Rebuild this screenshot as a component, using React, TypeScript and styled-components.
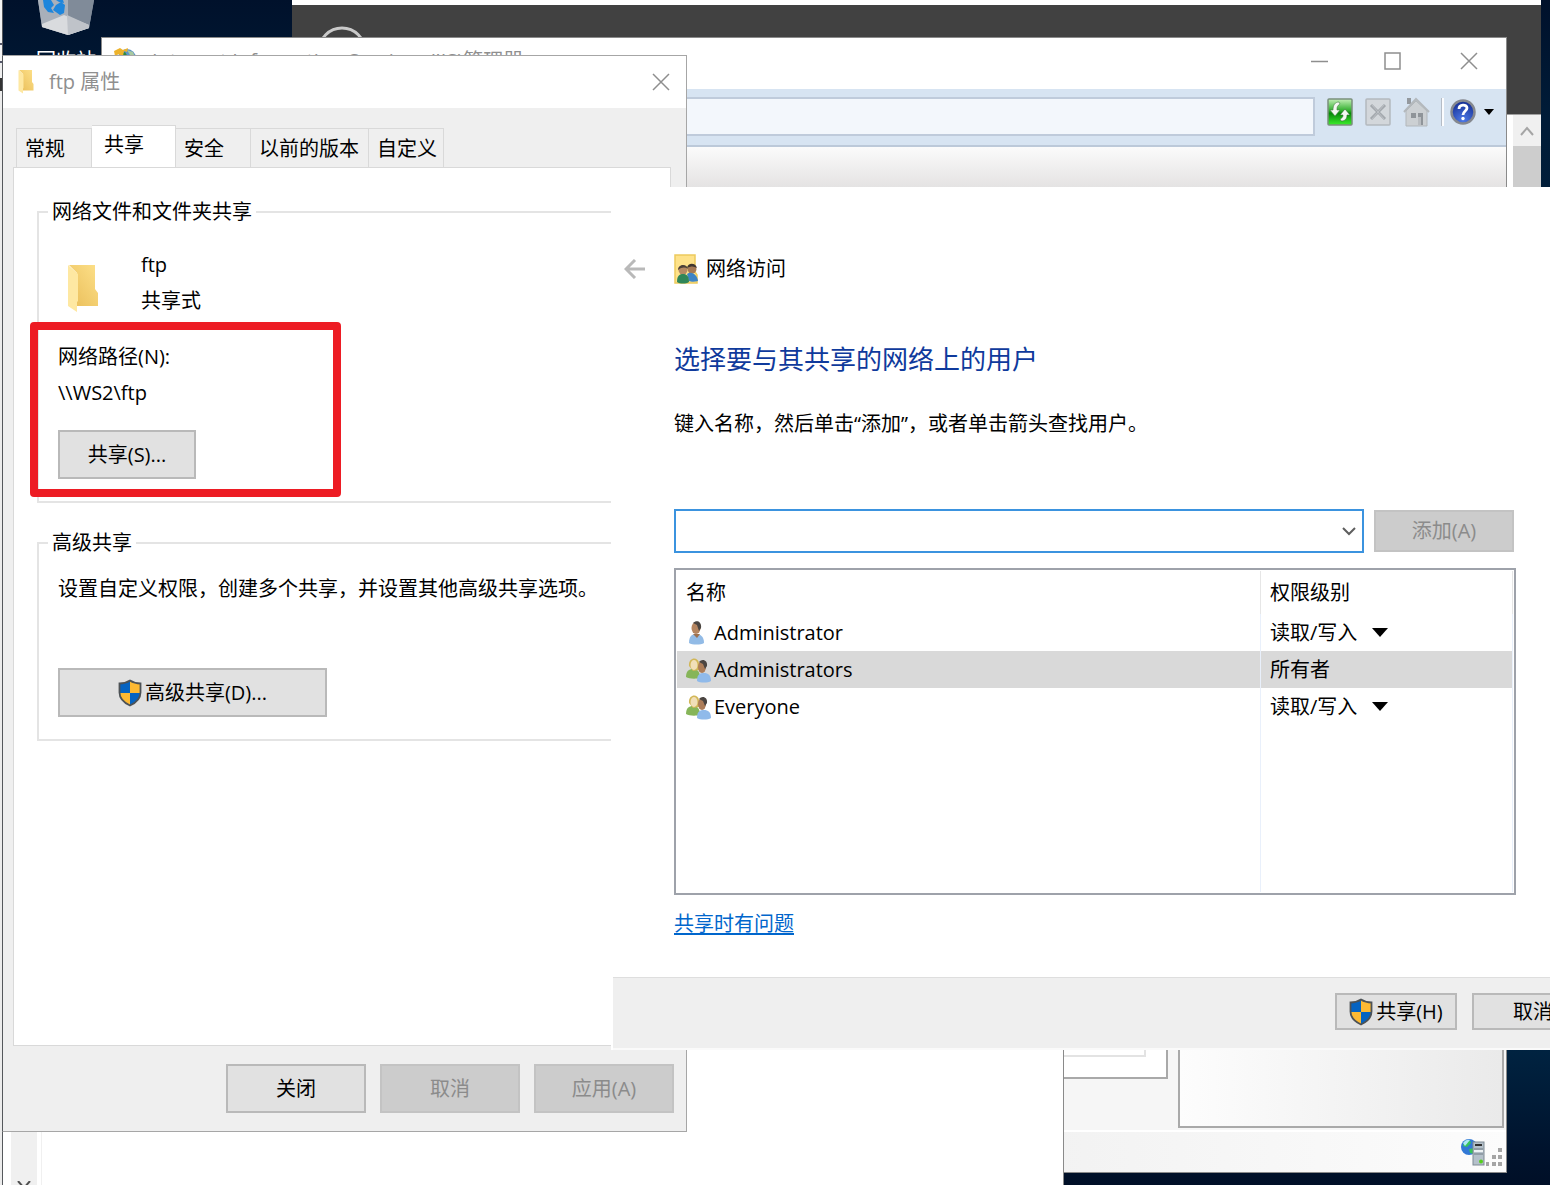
import React from 'react';
import styled, { createGlobalStyle, css } from 'styled-components';

const GlobalStyle = createGlobalStyle`
  *, *::before, *::after { box-sizing: border-box; }
  body { margin: 0; }
  body, button, input, select, table {
    font-family: "Open Sans", "Noto Sans CJK SC", sans-serif;
    font-size: 20px;
    line-height: 36px;
    color: #000;
  }
  h1, p { margin: 0; font-weight: 400; }
`;

/* ---------- desktop ---------- */

const Desktop = styled.main`
  position: relative;
  height: 100vh;
  min-height: 1100px;
  overflow: hidden;
  background: linear-gradient(180deg, #00112b 0%, #001c38 10%, #002442 88%, #00132d 97%, #000f27 100%);
`;

const Sliver = styled.div`
  position: absolute;
  left: 0;
  top: 0;
  bottom: 0;
  width: 3px;
  background: linear-gradient(#f4f4f4 0 43px, #55586a 43px 45px, #f4f4f4 45px 61px, #55586a 61px 63px, #f0f0f0 63px 78px, #333 78px 91px, #ececec 91px);
  border-right: 1px solid #55585c;
`;

const RecycleBin = styled.div`
  position: absolute;
  left: 20px;
  top: 0;
  width: 92px;
  display: flex;
  flex-direction: column;
  align-items: center;
  gap: 7px;
  color: #fff;
`;

/* ---------- server manager, behind everything ---------- */

const ManagerWindow = styled.section`
  position: absolute;
  left: 292px;
  right: 9px;
  top: 0;
  height: 600px;
  display: flex;
  flex-direction: column;
  background: #fff;
  padding-top: 5px;
`;

const ManagerBanner = styled.div`
  height: 109px;
  flex: none;
  padding: 21px 0 0 25px;
  background: #414141;
`;

const ManagerBody = styled.div`
  flex: 1;
  display: flex;
  justify-content: flex-end;
  border-top: 1px solid #a0a0a0;
`;

const ScrollTrack = styled.div`
  width: 28px;
  display: flex;
  flex-direction: column;
  background: #f0f0f0;
`;

const ScrollArrow = styled.div`
  height: 31px;
  display: flex;
  align-items: center;
  justify-content: center;
`;

const ScrollThumb = styled.div`
  height: 300px;
  background: #cdcdcd;
`;

/* ---------- IIS manager window ---------- */

const IisWindow = styled.section`
  position: absolute;
  left: 101px;
  right: 43px;
  top: 37px;
  bottom: 12px;
  display: flex;
  flex-direction: column;
  background: #fff;
  border: 1px solid #8a8a8a;
`;

const IisTitle = styled.header`
  height: 51px;
  flex: none;
  display: flex;
  align-items: center;
  gap: 11px;
  padding: 0 28px 5px 11px;
  color: #8f8f8f;
`;

const TitleText = styled.span`
  flex: 1;
  min-width: 0;
  white-space: nowrap;
`;

const CaptionButtons = styled.div`
  display: flex;
  gap: 39px;
`;

const IconButton = styled.button`
  display: inline-flex;
  align-items: center;
  justify-content: center;
  flex: none;
  padding: 0;
  border: 0;
  background: none;
`;

const AddressBar = styled.div`
  height: 58px;
  flex: none;
  display: flex;
  align-items: flex-start;
  gap: 12px;
  padding: 8px 12px 0 100px;
  background: #d7e4f2;
  border-bottom: 2px solid #bcc9d9;
`;

const AddressInput = styled.input`
  flex: 1;
  min-width: 0;
  height: 39px;
  background: #f3f7fc;
  border: 2px solid #bfcbdb;
  padding: 0 8px;
  outline: none;
`;

const BarIcons = styled.div`
  display: flex;
  align-items: center;
  gap: 12px;
`;

const HelpGroup = styled.div`
  display: flex;
  align-items: center;
  gap: 8px;
  padding-left: 6px;
  border-left: 2px solid #fbfcfe;
  box-shadow: -1px 0 0 #b5bcc6;
`;

const PageStrip = styled.div`
  height: 48px;
  flex: none;
  background: linear-gradient(#fbfbfb, #e0dede);
`;

const IisPanes = styled.div`
  flex: 1;
  display: flex;
  gap: 10px;
  padding: 0 2px 2px 0;
  background: #f6f6f6;
  border-bottom: 2px solid #fff;
`;

const CenterPane = styled.div`
  flex: 1;
  margin-bottom: 49px;
  padding: 0 20px 20px 0;
  display: flex;
  background: #fff;
  border: 2px solid #a9a9a9;
`;

const CenterInner = styled.div`
  flex: 1;
  border: 2px solid #e3e3e3;
`;

const ActionsPane = styled.div`
  width: 326px;
  background: linear-gradient(90deg, #fdfdfd, #eaeaea);
  border: 2px solid #a9a9a9;
`;

const StatusBar = styled.footer`
  height: 40px;
  flex: none;
  display: flex;
  align-items: center;
  justify-content: flex-end;
  padding-right: 3px;
  background: linear-gradient(90deg, #f0f0f0 60%, #fcfcfc);
`;

/* ---------- blank window at the lower left ---------- */

const BlankWindow = styled.section`
  position: absolute;
  left: 3px;
  bottom: 0;
  width: 1061px;
  height: 300px;
  display: flex;
  padding-left: 8px;
  background: #fff;
  border-right: 1px solid #8a8a8a;
`;

const BlankScroll = styled.div`
  width: 26px;
  display: flex;
  align-items: flex-end;
  justify-content: center;
  background: #f0f0f0;
`;

const BlankRule = styled.div`
  width: 5px;
  border-right: 1px solid #f0f0f0;
`;

/* ---------- properties dialog ---------- */

const PropsWindow = styled.section`
  position: absolute;
  left: 2px;
  top: 55px;
  bottom: 53px;
  width: 685px;
  display: flex;
  flex-direction: column;
  background: #efefef;
  border: 1px solid #a6a6a6;
  border-left-color: #55585c;
`;

const PropsTitle = styled.header`
  height: 52px;
  flex: none;
  display: flex;
  align-items: center;
  gap: 15px;
  padding: 0 16px 0 15px;
  background: #fff;
  color: #8f8f8f;
`;

const TabStrip = styled.div`
  flex: none;
  display: flex;
  align-items: flex-end;
  height: 59px;
  padding-left: 13px;
`;

const Tab = styled.button<{ $width: number; $selected?: boolean }>`
  width: ${(p) => p.$width}px;
  height: 39px;
  padding: 1px 0 0 8px;
  text-align: left;
  white-space: nowrap;
  background: #efefef;
  border: 1px solid #d9d9d9;
  border-left-width: 0;
  border-bottom: 0;
  &:first-child { border-left-width: 1px; }
  ${(p) =>
    p.$selected &&
    css`
      height: 43px;
      padding: 0 0 4px 12px;
      background: #fff;
      margin-bottom: -1px;
    `}
`;

const TabPanel = styled.div`
  flex: 1;
  display: flex;
  flex-direction: column;
  gap: 26px;
  margin: 0 15px 0 10px;
  padding: 30px 23px 0;
  background: #fff;
  border: 1px solid #d9d9d9;
`;

const Group = styled.fieldset`
  min-width: 0;
  margin: 0;
  padding: 14px 19px 22px;
  border: 2px solid #e4e4e4;
`;

const Legend = styled.legend`
  margin-left: -10px;
  padding: 0 4px;
  line-height: 28px;
`;

const ShareHead = styled.div`
  display: flex;
  align-items: center;
  gap: 43px;
  padding: 7px 0 0 10px;
  margin-bottom: 20px;
`;

const FolderSlot = styled.div`
  display: flex;
  padding-top: 12px;
`;

const PathBlock = styled.div`
  margin-bottom: 19px;
`;

const Note = styled.p`
  white-space: nowrap;
  margin-bottom: 61px;
`;

const PushButton = styled.button<{ $width: number; $height?: number }>`
  display: flex;
  align-items: center;
  justify-content: center;
  flex: none;
  gap: 3px;
  width: ${(p) => p.$width}px;
  height: ${(p) => p.$height ?? 49}px;
  padding: 0;
  white-space: nowrap;
  background: #e1e1e1;
  border: 2px solid #b9b9b9;
  &:disabled {
    background: #cccccc;
    border-color: #c3c3c3;
    color: #8b8b8b;
  }
`;

const PropsFooter = styled.footer`
  flex: none;
  display: flex;
  justify-content: flex-end;
  gap: 14px;
  padding: 18px 12px;
`;

/* ---------- network access wizard ---------- */

const Wizard = styled.section`
  position: absolute;
  left: 611px;
  right: -65px;
  top: 187px;
  bottom: 135px;
  display: flex;
  flex-direction: column;
  background: #fff;
`;

const WizardHeader = styled.header`
  display: flex;
  align-items: center;
  height: 36px;
  margin: 64px 0 0 13px;
`;

const WizardTitle = styled.span`
  display: flex;
  align-items: center;
  gap: 8px;
  margin-left: 28px;
`;

const WizardBody = styled.div`
  flex: 1;
  display: flex;
  flex-direction: column;
  padding: 54px 99px 0 63px;
`;

const Heading = styled.h1`
  font-size: 26px;
  line-height: 36px;
  color: #0f3a9c;
`;

const Hint = styled.p`
  margin-top: 29px;
`;

const AddRow = styled.div`
  display: flex;
  align-items: center;
  gap: 10px;
  margin-top: 67px;
  padding-right: 2px;
`;

const Combo = styled.div`
  flex: 1;
  display: flex;
  height: 44px;
  padding-right: 6px;
  background: #fff;
  border: 2px solid #3b93df;
`;

const ComboInput = styled.input`
  flex: 1;
  min-width: 0;
  border: 0;
  padding: 0 8px;
  background: none;
  outline: none;
`;

const ListBox = styled.div`
  height: 327px;
  margin-top: 15px;
  padding: 1px;
  border: 2px solid #9ea2aa;
`;

const UserTable = styled.table`
  width: 100%;
  height: 100%;
  border-collapse: collapse;
  table-layout: fixed;
  th, td {
    padding: 0 0 0 9px;
    text-align: left;
    font-weight: 400;
  }
  th { height: 43px; border-right: 1px solid #e6e6e6; }
  td { border-right: 1px solid #e9f0fb; }
`;

const NameCol = styled.col``;
const LevelCol = styled.col`
  width: 252px;
`;

const UserRow = styled.tr<{ $selected?: boolean }>`
  height: 37px;
  background: ${(p) => (p.$selected ? '#d9d9d9' : 'transparent')};
`;

const UserCell = styled.div`
  display: flex;
  align-items: center;
  gap: 3px;
  height: 36px;
`;

const LevelCell = styled(UserCell)`
  gap: 14px;
`;

const LevelSelect = styled.select`
  appearance: none;
  height: 36px;
  padding: 0;
  border: 0;
  background: none;
  outline: none;
`;

const HelpLink = styled.a`
  align-self: flex-start;
  margin-top: 11px;
  color: #0066cc;
  text-underline-offset: 2px;
`;

const WizardFooter = styled.footer`
  height: 73px;
  flex: none;
  display: flex;
  justify-content: flex-end;
  gap: 15px;
  padding: 15px 21px 0;
  margin-left: 2px;
  background: #efefef;
  border-top: 1px solid #dedede;
  border-bottom: 2px solid #fafafa;
`;

const Highlight = styled.div`
  position: absolute;
  left: 30px;
  top: 322px;
  width: 311px;
  height: 175px;
  border: 8px solid #ed1c24;
  border-radius: 4px;
  pointer-events: none;
`;

/* ---------- icons ---------- */

const BinIcon = () => (
  <svg width="60" height="36" viewBox="0 0 60 36">
    <path d="M2 0h56l-5 28-21 7L6 27z" fill="#8e98a5" />
    <path d="M2 0h30v35L6 27z" fill="#a9b0ba" />
    <path d="M32 0h26l-5 28-21 7z" fill="#808b99" />
    <path d="M6 24l22-9 25 10v3l-21 7L6 27z" fill="#d9dbde" />
    <path d="M31 15l22 10v3l-21 7z" fill="#bfc3c9" />
    <path d="M7 0h8l3 5-3 3 3 5-6-1-4-5zM20 5l5-3 4 3-1 8-4 2-7-5zM20 0h7l1 3-5-1z" fill="#1e86dc" />
  </svg>
);

const CloseGlyph = () => (
  <svg width="18" height="18" viewBox="0 0 18 18" stroke="#8e8e8e" strokeWidth="1.5" fill="none">
    <path d="M1 1l16 16M17 1L1 17" />
  </svg>
);

const FolderIcon = ({ w, h }: { w: number; h: number }) => (
  <svg width={w} height={h} viewBox="0 0 30 48">
    <defs>
      <linearGradient id="folderBack" x1="0" x2="1" y1="1" y2="0">
        <stop offset="0" stopColor="#e9bd58" />
        <stop offset="1" stopColor="#fde089" />
      </linearGradient>
    </defs>
    <path d="M1 0h26v24l3 4v13H9V8z" fill="url(#folderBack)" />
    <path d="M0 0l10 9v27l-1 1v10l-9-6z" fill="#fee8a2" />
  </svg>
);

const ShieldIcon = () => (
  <svg width="24" height="28" viewBox="0 0 24 28">
    <defs>
      <clipPath id="shieldShape">
        <path d="M12 1.500C9 3.500 5.500 4.500 1.500 4.500v9c0 6 4 10 10.500 13 6.500-3 10.500-7 10.500-13v-9C18.500 4.500 15 3.500 12 1.500z" />
      </clipPath>
    </defs>
    <g clipPath="url(#shieldShape)">
      <path d="M0 0h12v14H0zM12 14h12v14H12z" fill="#0563c1" />
      <path d="M12 0h12v14H12zM0 14h12v14H0z" fill="#fdb933" />
    </g>
    <path
      d="M12 1.500C9 3.500 5.500 4.500 1.500 4.500v9c0 6 4 10 10.500 13 6.500-3 10.500-7 10.500-13v-9C18.500 4.500 15 3.500 12 1.500z"
      fill="none"
      stroke="#4d5256"
      strokeWidth="1.8"
    />
  </svg>
);

const IisIcon = () => (
  <svg width="28" height="28" viewBox="0 0 28 28">
    <circle cx="14" cy="11" r="9" fill="#5c93c8" />
    <path d="M8 7l4-2 3 5-3 3-4-2z" fill="#2f8a3e" />
    <path d="M14 3l6 2 2 5-5-2z" fill="#a8c9a0" />
    <path d="M1 4l6-3 3 2 5-2-1 4-3-1-1 5-3 1-1-3-4 2z" fill="#edb32c" />
  </svg>
);

const RefreshIcon = () => (
  <svg width="26" height="28" viewBox="0 0 26 28">
    <defs>
      <linearGradient id="refreshFill" x1="0" x2="0" y1="0" y2="1">
        <stop offset="0" stopColor="#c3f0b6" />
        <stop offset=".45" stopColor="#2fae2c" />
        <stop offset=".55" stopColor="#07870a" />
        <stop offset="1" stopColor="#3cf02c" />
      </linearGradient>
    </defs>
    <rect x="1" y="1" width="24" height="26" rx="1" fill="url(#refreshFill)" stroke="#7b8f7c" strokeWidth="1.500" />
    <path d="M12 4c-4 0-6 3-6 8H3l5 6 5-6h-3c0-3 0-4 3-6z" fill="#f4f8f2" stroke="#4c7d4c" strokeWidth=".6" />
    <path d="M14 23c4 0 6-2 6-6h3l-5-6-5 6h3c0 2-1 3-3 4z" fill="#f4f8f2" stroke="#2f6a2f" strokeWidth=".6" />
  </svg>
);

const StopIcon = () => (
  <svg width="26" height="28" viewBox="0 0 26 28">
    <rect x="1" y="1" width="24" height="26" rx="1" fill="#d3d7db" stroke="#b4b9be" strokeWidth="1.500" />
    <path d="M6 7l14 14M20 7L6 21" stroke="#a3a8ad" strokeWidth="3" />
    <path d="M7 7l12 14M19 7L7 21" stroke="#c3c7cb" strokeWidth=".8" />
  </svg>
);

const HomeIcon = () => (
  <svg width="27" height="30" viewBox="0 0 27 30">
    <path d="M4 1h4v6H4z" fill="#94999e" />
    <path d="M3 14L13 4l11 10v15H3z" fill="#ccd0d3" stroke="#b2b7bb" />
    <path d="M1 15L13 2l13 13" fill="none" stroke="#b3b8bc" strokeWidth="2" />
    <path d="M8 16h5v5H8zM15 16h5v12h-5z" fill="#8f9499" />
    <path d="M15 20h3v8h-3z" fill="#b9bdc1" />
  </svg>
);

const HelpIcon = () => (
  <svg width="26" height="28" viewBox="0 0 26 28">
    <defs>
      <radialGradient id="helpFill" cx=".5" cy=".85" r=".8">
        <stop offset="0" stopColor="#4f7be8" />
        <stop offset="1" stopColor="#152f96" />
      </radialGradient>
    </defs>
    <circle cx="13" cy="14" r="11.500" fill="url(#helpFill)" stroke="#85888f" strokeWidth="2.500" />
    <path d="M9 11c0-5 8-5 8-1 0 3-4 3-4 7" fill="none" stroke="#fff" strokeWidth="2.800" />
    <circle cx="13" cy="20.500" r="1.700" fill="#fff" />
  </svg>
);

const DownTriangle = ({ width, height }: { width: number; height: number }) => (
  <svg width={width} height={height} viewBox="0 0 16 9" preserveAspectRatio="none">
    <path d="M0 0h16L8 9z" fill="#000" />
  </svg>
);

const Chevron = ({ up, color }: { up?: boolean; color: string }) => (
  <svg width="14" height="10" viewBox="0 0 14 10" fill="none" stroke={color} strokeWidth="2">
    <path d={up ? 'M1 9l6-7 6 7' : 'M1 2l6 6 6-6'} />
  </svg>
);

const SharedFolderIcon = () => (
  <svg width="24" height="30" viewBox="0 0 24 30">
    <path d="M1 1h20v17l2 3v8H1z" fill="#fee28a" stroke="#edca5d" strokeWidth="1.500" />
    <circle cx="18" cy="15" r="4.500" fill="#a67a55" />
    <path d="M13 14c1-6 9-5 10 0-3-2-6-2-10 0z" fill="#40362f" />
    <path d="M13 20c4-3 10 0 11 7-3 1-7 1-9 0z" fill="#3d84c6" />
    <circle cx="9" cy="16" r="4.500" fill="#b58a63" />
    <path d="M4 16c0-6 9-7 10-1-3-2-6-2-10 1z" fill="#4c4038" />
    <path d="M3 28c0-7 3-8 6-8s6 1 6 8c-3 2-9 2-12 0z" fill="#2f8658" />
  </svg>
);

const UserIcon = () => (
  <svg width="25" height="26" viewBox="0 0 25 26">
    <path d="M3 23c0-7 3-9 7-9s8 2 8 9c-3 2-12 2-15 0z" fill="#92bbe6" />
    <ellipse cx="10" cy="8" rx="4.500" ry="6" fill="#b58560" />
    <path d="M7 3c4-4 9-1 8 5l-2 3-2-6z" fill="#4b4541" />
    <path d="M7 14l4 4 3-4z" fill="#9d7150" />
  </svg>
);

const GroupIcon = () => (
  <svg width="25" height="26" viewBox="0 0 25 26">
    <path d="M0 20c0-6 3-8 7-8s7 2 7 9c-4 1-11 1-14-1z" fill="#86b559" />
    <path d="M3 9c-1-9 9-10 10-3v7L7 14z" fill="#d2b758" />
    <ellipse cx="8" cy="8" rx="3.500" ry="5" fill="#f1dfb8" />
    <path d="M11 24c0-7 3-8 7-8s7 2 7 8c-3 2-11 2-14 0z" fill="#90baea" />
    <ellipse cx="16" cy="10" rx="4" ry="6" fill="#ad7d58" />
    <path d="M13 5c3-4 9-2 8 4l-2 3-2-5z" fill="#4b4541" />
  </svg>
);

const ServerIcon = () => (
  <svg width="24" height="28" viewBox="0 0 24 28">
    <circle cx="8" cy="9" r="8" fill="#3279d6" />
    <path d="M3 4c3-3 7-2 7 1l-4 4-4-1zM8 11l5-1v6l-4-1z" fill="#36c45b" />
    <path d="M2 5c2-3 5-4 7-3L4 8z" fill="#aeeaf5" />
    <rect x="12" y="4" width="11" height="23" fill="#b4c0ca" stroke="#7e8a93" />
    <path d="M14 7h7" stroke="#333" strokeWidth="2" />
    <path d="M13 11h9M13 16h9" stroke="#6f7a83" />
    <path d="M13 13h9" stroke="#eef2f4" strokeWidth="2" />
    <circle cx="20" cy="23.500" r="2" fill="#55cf1c" />
  </svg>
);

const GripIcon = () => (
  <svg width="18" height="28" viewBox="0 0 18 28" fill="#a5a5a5">
    <path d="M13 10h4v4h-4zM7 17h4v4H7zM13 17h4v4h-4zM1 24h3v4H1zM7 24h4v4H7zM13 24h4v4h-4z" />
  </svg>
);

/* ---------- page ---------- */

const users = [
  { name: 'Administrator', level: '读取/写入', group: false, owner: false },
  { name: 'Administrators', level: '所有者', group: true, owner: true },
  { name: 'Everyone', level: '读取/写入', group: true, owner: false },
];

const tabs = [
  { label: '常规', width: 76 },
  { label: '共享', width: 84, selected: true },
  { label: '安全', width: 75 },
  { label: '以前的版本', width: 118 },
  { label: '自定义', width: 75 },
];

export default function App() {
  return (
    <Desktop>
      <GlobalStyle />
      <Sliver />
      <RecycleBin>
        <BinIcon />
        <span>回收站</span>
      </RecycleBin>

      <ManagerWindow>
        <ManagerBanner>
          <svg width="50" height="50" viewBox="0 0 50 50" fill="none" stroke="#c9c9c9" strokeWidth="3">
            <circle cx="25" cy="25" r="23" />
          </svg>
        </ManagerBanner>
        <ManagerBody>
          <ScrollTrack>
            <ScrollArrow>
              <Chevron up color="#a5a5a5" />
            </ScrollArrow>
            <ScrollThumb />
          </ScrollTrack>
        </ManagerBody>
      </ManagerWindow>

      <IisWindow>
        <IisTitle>
          <IisIcon />
          <TitleText>Internet Information Services (IIS)管理器</TitleText>
          <CaptionButtons>
            <IconButton aria-label="最小化">
              <svg width="18" height="18" viewBox="0 0 18 18">
                <path d="M1 9.500h17" stroke="#8e8e8e" strokeWidth="1.500" />
              </svg>
            </IconButton>
            <IconButton aria-label="最大化">
              <svg width="54" height="18" viewBox="0 0 54 18">
                <rect x="18" y="1" width="15" height="16" fill="none" stroke="#8e8e8e" strokeWidth="1.500" />
              </svg>
            </IconButton>
            <IconButton aria-label="关闭">
              <CloseGlyph />
            </IconButton>
          </CaptionButtons>
        </IisTitle>
        <AddressBar>
          <AddressInput aria-label="地址" />
          <BarIcons>
            <IconButton aria-label="刷新"><RefreshIcon /></IconButton>
            <IconButton aria-label="停止"><StopIcon /></IconButton>
            <IconButton aria-label="主页"><HomeIcon /></IconButton>
            <HelpGroup>
              <IconButton aria-label="帮助"><HelpIcon /></IconButton>
              <DownTriangle width={10} height={6} />
            </HelpGroup>
          </BarIcons>
        </AddressBar>
        <PageStrip />
        <IisPanes>
          <CenterPane>
            <CenterInner />
          </CenterPane>
          <ActionsPane />
        </IisPanes>
        <StatusBar>
          <ServerIcon />
          <GripIcon />
        </StatusBar>
      </IisWindow>

      <BlankWindow>
        <BlankScroll>
          <svg width="14" height="4" viewBox="0 0 14 4" fill="none" stroke="#505050" strokeWidth="2">
            <path d="M1 0l6 7 6-7" />
          </svg>
        </BlankScroll>
        <BlankRule />
      </BlankWindow>

      <PropsWindow>
        <PropsTitle>
          <FolderIcon w={16} h={24} />
          <TitleText>ftp 属性</TitleText>
          <IconButton aria-label="关闭">
            <CloseGlyph />
          </IconButton>
        </PropsTitle>
        <TabStrip role="tablist">
          {tabs.map((t) => (
            <Tab key={t.label} role="tab" $width={t.width} $selected={t.selected} aria-selected={!!t.selected}>
              {t.label}
            </Tab>
          ))}
        </TabStrip>
        <TabPanel role="tabpanel">
          <Group>
            <Legend>网络文件和文件夹共享</Legend>
            <ShareHead>
              <FolderSlot>
                <FolderIcon w={30} h={48} />
              </FolderSlot>
              <div>
                <div>ftp</div>
                <div>共享式</div>
              </div>
            </ShareHead>
            <PathBlock>
              <div>网络路径(N):</div>
              <div>{'\\\\WS2\\ftp'}</div>
            </PathBlock>
            <PushButton $width={138}>共享(S)...</PushButton>
          </Group>
          <Group>
            <Legend>高级共享</Legend>
            <Note>设置自定义权限，创建多个共享，并设置其他高级共享选项。</Note>
            <PushButton $width={269}>
              <ShieldIcon />
              高级共享(D)...
            </PushButton>
          </Group>
        </TabPanel>
        <PropsFooter>
          <PushButton $width={140}>关闭</PushButton>
          <PushButton $width={140} disabled>取消</PushButton>
          <PushButton $width={140} disabled>应用(A)</PushButton>
        </PropsFooter>
      </PropsWindow>

      <Wizard>
        <WizardHeader>
          <IconButton aria-label="返回">
            <svg width="22" height="20" viewBox="0 0 22 20" fill="none" stroke="#b9b9b9" strokeWidth="3">
              <path d="M21 10H3M11 1l-9 9 9 9" />
            </svg>
          </IconButton>
          <WizardTitle>
            <SharedFolderIcon />
            网络访问
          </WizardTitle>
        </WizardHeader>
        <WizardBody>
          <Heading>选择要与其共享的网络上的用户</Heading>
          <Hint>键入名称，然后单击“添加”，或者单击箭头查找用户。</Hint>
          <AddRow>
            <Combo>
              <ComboInput aria-label="用户名称" />
              <IconButton aria-label="展开用户列表">
                <Chevron color="#5e5e5e" />
              </IconButton>
            </Combo>
            <PushButton $width={140} $height={42} disabled>添加(A)</PushButton>
          </AddRow>
          <ListBox>
            <UserTable>
              <colgroup>
                <NameCol />
                <LevelCol />
              </colgroup>
              <thead>
                <tr>
                  <th>名称</th>
                  <th>权限级别</th>
                </tr>
              </thead>
              <tbody>
                {users.map((u) => (
                  <UserRow key={u.name} $selected={u.owner}>
                    <td>
                      <UserCell>
                        {u.group ? <GroupIcon /> : <UserIcon />}
                        {u.name}
                      </UserCell>
                    </td>
                    <td>
                      {u.owner ? (
                        <LevelCell>{u.level}</LevelCell>
                      ) : (
                        <LevelCell>
                          <LevelSelect aria-label={`${u.name} 权限级别`}>
                            <option>{u.level}</option>
                          </LevelSelect>
                          <DownTriangle width={16} height={9} />
                        </LevelCell>
                      )}
                    </td>
                  </UserRow>
                ))}
                <tr>
                  <td />
                  <td />
                </tr>
              </tbody>
            </UserTable>
          </ListBox>
          <HelpLink href="#help">共享时有问题</HelpLink>
        </WizardBody>
        <WizardFooter>
          <PushButton $width={122} $height={37}>
            <ShieldIcon />
            共享(H)
          </PushButton>
          <PushButton $width={122} $height={37}>取消</PushButton>
        </WizardFooter>
      </Wizard>

      <Highlight />
    </Desktop>
  );
}
